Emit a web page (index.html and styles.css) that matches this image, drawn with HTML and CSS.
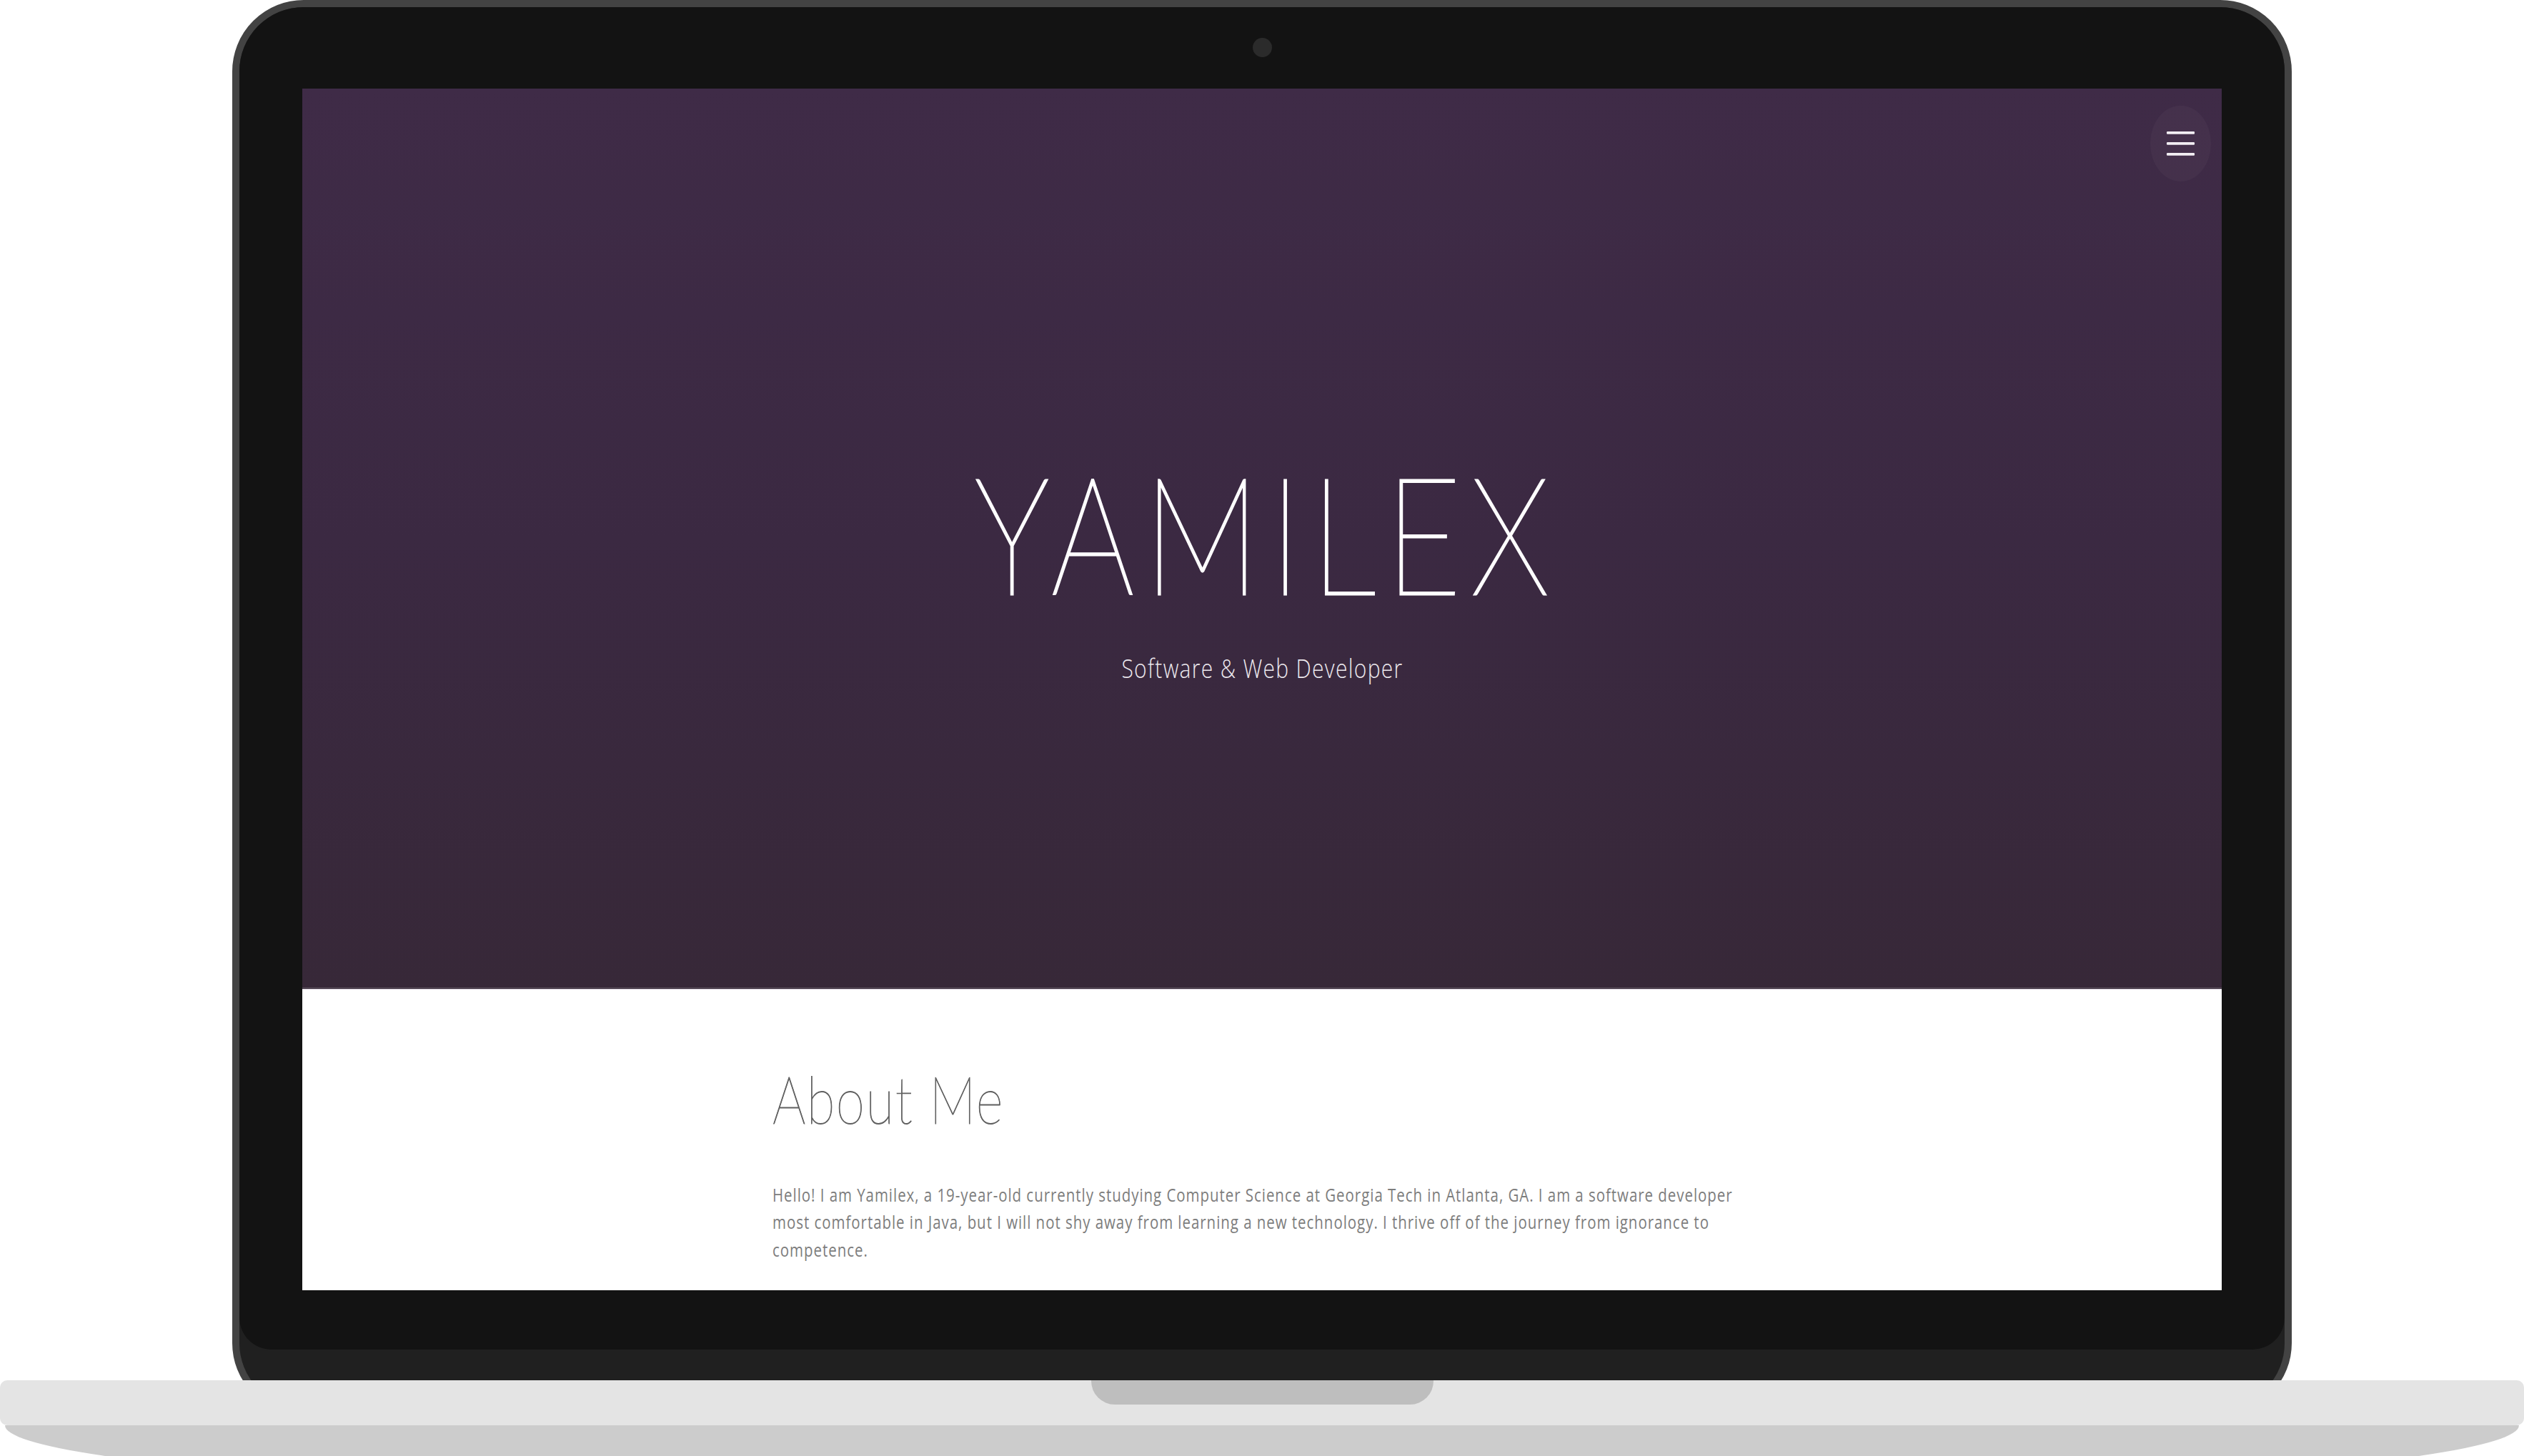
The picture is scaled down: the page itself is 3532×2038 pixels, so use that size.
FILE: index.html
```html
<!DOCTYPE html>
<html lang="en">
<head>
<meta charset="utf-8">
<title>Yamilex</title>
<link rel="stylesheet" href="styles.css">
</head>
<body>
<div class="stage">
  <div class="lid">
    <div class="bezel">
      <div class="camera"></div>
      <div class="screen">
        <div class="page">
          <header class="hero">
            <button class="menu-btn" aria-label="Menu">
              <span class="bar"></span>
              <span class="bar"></span>
              <span class="bar"></span>
            </button>
            <h1 class="hero-title">YAMILEX</h1>
            <p class="hero-sub">Software &amp; Web Developer</p>
          </header>
          <section class="about">
            <div class="about-inner">
              <h2 class="about-title">About Me</h2>
              <p class="about-text">Hello! I am Yamilex, a 19-year-old currently studying Computer Science at Georgia Tech in Atlanta, GA. I am a software developer most comfortable in Java, but I will not shy away from learning a new technology. I thrive off of the journey from ignorance to competence.</p>
            </div>
          </section>
        </div>
      </div>
    </div>
  </div>
  <div class="base">
    <div class="base-top">
      <div class="notch"></div>
    </div>
    <div class="base-bottom"></div>
  </div>
</div>
</body>
</html>
```

FILE: styles.css
```css
html, body {
  margin: 0;
  padding: 0;
  overflow: hidden;
  background: #ffffff;
}

.stage {
  width: 3532px;
  height: 2038px;
  overflow: hidden;
  background: #ffffff;
}

.lid {
  box-sizing: border-box;
  width: 2882px;
  height: 1980px;
  margin-left: 325px;
  border: 10px solid #434343;
  border-radius: 100px;
  background: #202020;
}

.bezel {
  display: flex;
  flex-direction: column;
  align-items: center;
  box-sizing: border-box;
  height: 1879px;
  padding: 43px 88px 0;
  background: #131313;
  border-radius: 90px 90px 45px 45px;
}

.camera {
  width: 27px;
  height: 27px;
  border-radius: 50%;
  background: #2b2b2b;
  margin-bottom: 44px;
  flex: none;
}

.screen {
  width: 2686px;
  height: 1682px;
  overflow: hidden;
  background: #ffffff;
  flex: none;
}

.page {
  width: 2686px;
  transform: scaleY(1.25);
  transform-origin: top left;
}

.hero {
  position: relative;
  box-sizing: border-box;
  height: 1008px;
  padding-top: 404px;
  text-align: center;
  background: linear-gradient(180deg, #3f2b47 0%, #3b2942 50%, #372838 100%);
  border-bottom: 1px solid #2a1d2c;
}

.menu-btn {
  position: absolute;
  top: 19px;
  right: 15px;
  width: 85px;
  height: 85px;
  padding: 0;
  border: 0;
  border-radius: 50%;
  background: rgba(255, 255, 255, 0.03);
  display: flex;
  flex-direction: column;
  align-items: center;
  justify-content: center;
  gap: 9px;
}

.bar {
  display: block;
  width: 39px;
  height: 3px;
  background: #f2eef3;
  border-radius: 1px;
}

.hero-title {
  margin: 0;
  padding-left: 13px;
  font-family: "Lato", "Liberation Sans", sans-serif;
  font-weight: 200;
  font-size: 183px;
  line-height: 1;
  color: #ffffff;
  letter-spacing: 13px;
  -webkit-text-stroke: 2.5px #ffffff;
}

.hero-sub {
  margin: 44px 0 0;
  padding-left: 1px;
  font-family: "Open Sans", "Liberation Sans", sans-serif;
  font-weight: 300;
  font-size: 30px;
  line-height: 36px;
  letter-spacing: 1.3px;
  color: #ece8ee;
}

.about {
  background: #ffffff;
  border-top: 1px solid #d9d0dc;
}

.about-inner {
  width: 1370px;
  margin: 0 auto;
  padding-top: 86px;
}

.about-title {
  margin: 0;
  font-family: "Lato", "Liberation Sans", sans-serif;
  font-weight: 200;
  font-size: 73px;
  line-height: 1;
  letter-spacing: 1.5px;
  color: #606060;
  -webkit-text-stroke: 0.8px #606060;
}

.about-text {
  margin: 55px 0 0;
  font-family: "Open Sans", "Liberation Sans", sans-serif;
  font-weight: 400;
  font-size: 20.5px;
  line-height: 31.2px;
  letter-spacing: 0.95px;
  color: #7d7d7d;
}

.base {
  position: relative;
  margin-top: -48px;
}

.base-top {
  height: 63px;
  background: #e4e4e4;
  border-radius: 10px;
}

.notch {
  width: 479px;
  height: 34px;
  margin: 0 auto;
  background: #bebebe;
  border-radius: 0 0 33px 33px;
}

.base-bottom {
  height: 110px;
  margin: 0 7px;
  background: #cccccc;
  border-radius: 0 0 50% 50% / 0 0 100% 100%;
}
```
